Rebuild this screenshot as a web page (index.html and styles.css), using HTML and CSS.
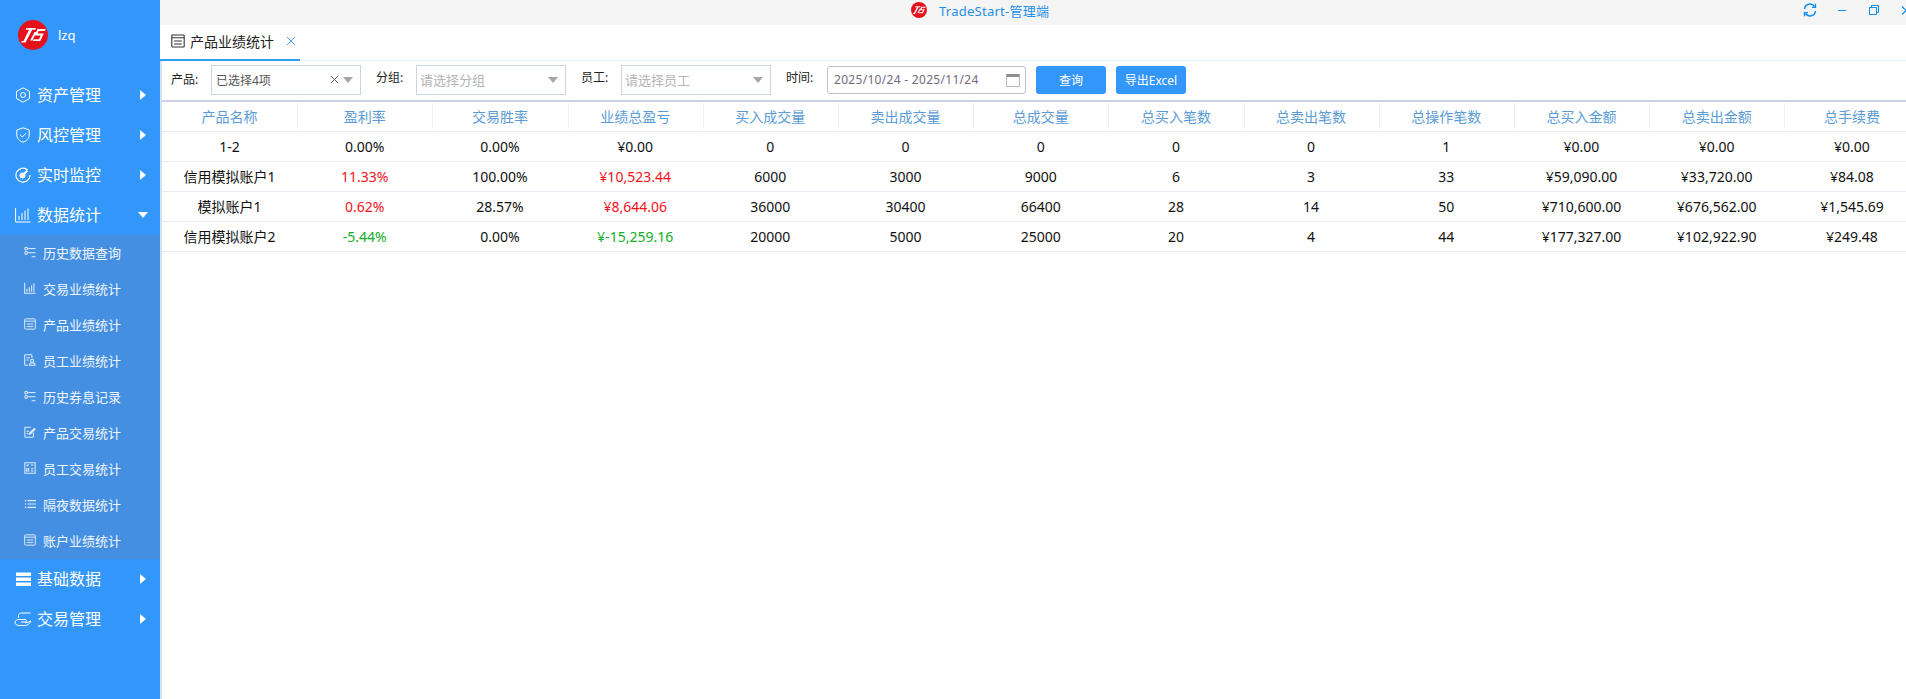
FILE: index.html
```html
<!DOCTYPE html>
<html lang="zh-CN">
<head>
<meta charset="utf-8">
<title>TradeStart-管理端</title>
<link rel="stylesheet" href="styles.css">
</head>
<body>
<svg class="defs" width="0" height="0" aria-hidden="true">
  <symbol id="logo" viewBox="0 0 30 30">
    <circle cx="15" cy="15" r="15" fill="#e5121d"/>
    <path d="M8.500 8h9.500l-.8 1.800h-3L7.500 22.500H3l.8-1.500h1.700l5.600-11.200H7.600z" fill="#fff"/>
    <path d="M12.200 20.500l4.300-8.500h2.100l-4.300 8.500z" fill="#fff"/>
    <path d="M19.500 9h8.300l-1 1.900h-6l-1.300 2.600h6.300l-3.500 7.600h-7.500l.9-1.800h5.300l1.700-3.900h-6.200z" fill="#fff"/>
  </symbol>
  <symbol id="doc" viewBox="0 0 14 14">
    <path d="M1.500 1h11a.7.7 0 0 1 .7.7v10.600a.7.7 0 0 1-.7.7h-11a.7.7 0 0 1-.7-.7V1.700a.7.7 0 0 1 .7-.7zM.8 3.700h12.400M3.200 7h7.600M3.200 10h7.600" fill="none" stroke="currentColor" stroke-width="1.100"/>
  </symbol>
  <symbol id="sliders" viewBox="0 0 14 14">
    <circle cx="2.500" cy="3" r="1.600" fill="none" stroke="currentColor" stroke-width="1.200"/><path d="M5 3h8.500" stroke="currentColor" stroke-width="1.200"/>
    <circle cx="2.500" cy="8" r="1.600" fill="none" stroke="currentColor" stroke-width="1.200"/><path d="M5 8h8.500M9 12.500h4.500" stroke="currentColor" stroke-width="1.200"/>
  </symbol>
  <symbol id="bars" viewBox="0 0 14 14">
    <path d="M.8 1v12.200h12.800M3.500 8v3.500M6.200 6v5.500M8.900 4v7.500M11.600 1.500v10" fill="none" stroke="currentColor" stroke-width="1.200"/>
  </symbol>
  <symbol id="person-doc" viewBox="0 0 14 14">
    <path d="M5 13H1.500a.7.700 0 0 1-.7-.7V1.700a.7.700 0 0 1 .7-.7h7a.7.700 0 0 1 .7.7v3M3 4.500h4M3 7h2.500" fill="none" stroke="currentColor" stroke-width="1.200"/>
    <circle cx="9.500" cy="8" r="1.800" fill="none" stroke="currentColor" stroke-width="1.200"/><path d="M6.500 13c0-2 1.300-2.800 3-2.800s3.500.8 3.500 2.800z" fill="none" stroke="currentColor" stroke-width="1.200"/>
  </symbol>
  <symbol id="edit" viewBox="0 0 14 14">
    <path d="M11 7.500v4.800a.7.700 0 0 1-.7.7H1.700a.7.700 0 0 1-.7-.7V2.200a.7.700 0 0 1 .7-.7H8M3 6h3M3 9h2.500" fill="none" stroke="currentColor" stroke-width="1.200"/>
    <path d="M5.500 10.500l.5-2.500L12 2l1.800 1.800-6 6z" fill="currentColor"/>
  </symbol>
  <symbol id="calc" viewBox="0 0 14 14">
    <path d="M1 1h12v12H1zM3 3.500l1 1 1.500-2M8 3.500h3M3 8h2.500v2.500H3zM8 8h3M8 10.500h3" fill="none" stroke="currentColor" stroke-width="1.200"/>
  </symbol>
  <symbol id="list" viewBox="0 0 14 14">
    <path d="M4 3h10M4 7h10M4 11h10" stroke="currentColor" stroke-width="1.400"/>
    <path d="M1 3h1.500M1 7h1.500M1 11h1.500" stroke="currentColor" stroke-width="1.400"/>
  </symbol>
  <symbol id="arrow-right" viewBox="0 0 6 10"><path d="M0 0l6 5-6 5z" fill="currentColor"/></symbol>
  <symbol id="arrow-down" viewBox="0 0 10 6"><path d="M0 0h10L5 6z" fill="currentColor"/></symbol>
</svg>

<div class="app">
  <aside class="sidebar">
    <div class="profile">
      <svg class="profile-logo"><use href="#logo"/></svg>
      <span class="profile-name">lzq</span>
    </div>
    <nav class="menu">
      <a class="menu-item">
        <svg class="menu-icon" viewBox="0 0 16 16" fill="none" stroke="currentColor"><path d="M8 .8l6.500 3.600v7.200L8 15.200l-6.500-3.600V4.400z"/><circle cx="8" cy="8" r="2.500"/></svg>
        <span class="menu-label">资产管理</span>
        <svg class="caret-right"><use href="#arrow-right"/></svg>
      </a>
      <a class="menu-item">
        <svg class="menu-icon" viewBox="0 0 16 16" fill="none" stroke="currentColor"><path d="M8 .8l6.200 2.200v5c0 3.500-2.700 6-6.200 7.200C4.500 14 1.800 11.500 1.800 8V3z"/><path d="M5 7.800l2.300 2.200 3.800-3.800"/></svg>
        <span class="menu-label">风控管理</span>
        <svg class="caret-right"><use href="#arrow-right"/></svg>
      </a>
      <a class="menu-item">
        <svg class="menu-icon" viewBox="0 0 16 16" fill="none" stroke="currentColor"><path d="M12.500 2.800A7 7 0 1 0 15 8" stroke-width="1.200"/><circle cx="7.500" cy="8.500" r="2.600" fill="currentColor"/><path d="M8 8l4.500-4.500" stroke-width="2"/></svg>
        <span class="menu-label">实时监控</span>
        <svg class="caret-right"><use href="#arrow-right"/></svg>
      </a>
      <a class="menu-item">
        <svg class="menu-icon" viewBox="0 0 16 16" fill="none" stroke="currentColor"><path d="M.6 1v14h15M4 9v4M7 6v7M10 3.500V13M13 1.500V13"/></svg>
        <span class="menu-label">数据统计</span>
        <svg class="caret-down"><use href="#arrow-down"/></svg>
      </a>
      <div class="submenu">
        <a class="sub-item"><svg class="sub-icon"><use href="#sliders"/></svg><span>历史数据查询</span></a>
        <a class="sub-item"><svg class="sub-icon"><use href="#bars"/></svg><span>交易业绩统计</span></a>
        <a class="sub-item"><svg class="sub-icon"><use href="#doc"/></svg><span>产品业绩统计</span></a>
        <a class="sub-item"><svg class="sub-icon"><use href="#person-doc"/></svg><span>员工业绩统计</span></a>
        <a class="sub-item"><svg class="sub-icon"><use href="#sliders"/></svg><span>历史券息记录</span></a>
        <a class="sub-item"><svg class="sub-icon"><use href="#edit"/></svg><span>产品交易统计</span></a>
        <a class="sub-item"><svg class="sub-icon"><use href="#calc"/></svg><span>员工交易统计</span></a>
        <a class="sub-item"><svg class="sub-icon"><use href="#list"/></svg><span>隔夜数据统计</span></a>
        <a class="sub-item"><svg class="sub-icon"><use href="#doc"/></svg><span>账户业绩统计</span></a>
      </div>
      <a class="menu-item">
        <svg class="menu-icon" viewBox="0 0 16 16" fill="currentColor"><path d="M1 1.500h15v3.500H1zM1 6.500h15V10H1zM1 11.500h15V15H1z"/></svg>
        <span class="menu-label">基础数据</span>
        <svg class="caret-right"><use href="#arrow-right"/></svg>
      </a>
      <a class="menu-item">
        <svg class="menu-icon wide" viewBox="0 0 18 16" fill="none" stroke="currentColor"><path d="M4.500 7V4.500C4.500 3 6 2 7.500 2h9M4 8.500h7c2 0 2 2.500 0 2.500H7"/><path d="M1 11c1-2 2-2.500 3-2.500M1 11c0 2 1.500 3.500 4 3.500h6c2.500 0 5-2 6-4.500-2 1-4 1.500-6 2"/></svg>
        <span class="menu-label">交易管理</span>
        <svg class="caret-right"><use href="#arrow-right"/></svg>
      </a>
    </nav>
  </aside>

  <main class="main">
    <header class="titlebar">
      <svg class="title-logo"><use href="#logo"/></svg>
      <span class="title-text">TradeStart-管理端</span>
      <div class="window-controls">
        <svg class="win-btn" viewBox="0 0 14 14" fill="none" stroke="currentColor" stroke-width="1.500"><path d="M1.500 6A5.500 5.500 0 0 1 11.500 3.500M12.500 8A5.500 5.500 0 0 1 2.500 10.500"/><path d="M12.500 .8v3.500H9M1.500 13.200V9.700H5" stroke-width="1.300"/></svg>
        <svg class="win-btn" viewBox="0 0 14 14" stroke="currentColor"><path d="M3 7.500h8"/></svg>
        <svg class="win-btn" viewBox="0 0 14 14" fill="none" stroke="currentColor"><path d="M2.500 4.500h7v7h-7zM4.500 4.500v-2h7v7h-2"/></svg>
        <svg class="win-btn" viewBox="0 0 14 14" fill="none" stroke="currentColor" stroke-width="1.200"><path d="M3 3.500l8 8M11 3.500l-8 8"/></svg>
      </div>
    </header>

    <div class="tabs">
      <div class="tab">
        <svg class="tab-icon"><use href="#doc"/></svg>
        <span>产品业绩统计</span>
        <svg class="tab-close" viewBox="0 0 10 10" stroke="currentColor"><path d="M1 1l8 8M9 1l-8 8"/></svg>
      </div>
    </div>

    <div class="content">
      <form class="toolbar">
        <label class="field-label">产品:</label>
        <div class="select">
          <span class="select-value">已选择4项</span>
          <svg class="select-clear" viewBox="0 0 10 10" stroke="currentColor"><path d="M1 1l8 8M9 1l-8 8"/></svg>
          <svg class="select-arrow"><use href="#arrow-down"/></svg>
        </div>
        <label class="field-label raised">分组:</label>
        <div class="select">
          <span class="select-placeholder">请选择分组</span>
          <svg class="select-arrow"><use href="#arrow-down"/></svg>
        </div>
        <label class="field-label raised">员工:</label>
        <div class="select">
          <span class="select-placeholder">请选择员工</span>
          <svg class="select-arrow"><use href="#arrow-down"/></svg>
        </div>
        <label class="field-label raised">时间:</label>
        <div class="date-range">
          <span>2025/10/24 - 2025/11/24</span>
          <svg class="calendar" viewBox="0 0 14 14"><path d="M.5 1.500h13v12H.5z" fill="#fff" stroke="#b9b9b9"/><path d="M.5 1h13v3H.5z" fill="#8d8d8d"/></svg>
        </div>
        <button type="button" class="btn btn-query">查询</button>
        <button type="button" class="btn btn-export">导出Excel</button>
      </form>

      <div class="table-wrap">
        <table class="grid">
          <thead>
            <tr>
              <th>产品名称</th><th>盈利率</th><th>交易胜率</th><th>业绩总盈亏</th><th>买入成交量</th><th>卖出成交量</th><th>总成交量</th><th>总买入笔数</th><th>总卖出笔数</th><th>总操作笔数</th><th>总买入金额</th><th>总卖出金额</th><th>总手续费</th>
            </tr>
          </thead>
          <tbody>
            <tr><td>1-2</td><td>0.00%</td><td>0.00%</td><td>¥0.00</td><td>0</td><td>0</td><td>0</td><td>0</td><td>0</td><td>1</td><td>¥0.00</td><td>¥0.00</td><td>¥0.00</td></tr>
            <tr><td>信用模拟账户1</td><td class="up">11.33%</td><td>100.00%</td><td class="up">¥10,523.44</td><td>6000</td><td>3000</td><td>9000</td><td>6</td><td>3</td><td>33</td><td>¥59,090.00</td><td>¥33,720.00</td><td>¥84.08</td></tr>
            <tr><td>模拟账户1</td><td class="up">0.62%</td><td>28.57%</td><td class="up">¥8,644.06</td><td>36000</td><td>30400</td><td>66400</td><td>28</td><td>14</td><td>50</td><td>¥710,600.00</td><td>¥676,562.00</td><td>¥1,545.69</td></tr>
            <tr><td>信用模拟账户2</td><td class="down">-5.44%</td><td>0.00%</td><td class="down">¥-15,259.16</td><td>20000</td><td>5000</td><td>25000</td><td>20</td><td>4</td><td>44</td><td>¥177,327.00</td><td>¥102,922.90</td><td>¥249.48</td></tr>
          </tbody>
        </table>
      </div>
    </div>
  </main>
</div>
</body>
</html>
```
FILE: styles.css
```css
* { box-sizing: border-box; }
html, body { height: 100%; }
body {
  margin: 0;
  overflow: hidden;
  background: #fff;
  color: #111;
  font-family: "Noto Sans", "Noto Sans CJK SC", sans-serif;
  font-size: 14px;
}
.defs { position: absolute; }
.app { display: flex; height: 100%; }

/* sidebar */
.sidebar {
  flex: 0 0 160px;
  background: #3396fb;
  color: #fff;
}
.profile {
  display: flex;
  align-items: center;
  height: 75px;
  padding: 0 0 5px 18px;
}
.profile-logo { width: 30px; height: 30px; }
.profile-name { margin-left: 10px; font-size: 13px; line-height: 1; }
.menu-item {
  display: flex;
  align-items: center;
  height: 40px;
  padding-left: 15px;
  font-size: 16px;
}
.menu-icon { width: 16px; height: 16px; flex: none; }
.menu-icon.wide { width: 18px; margin-left: -1px; margin-right: -1px; }
.menu-label { margin-left: 6px; width: 94px; line-height: 1; }
.caret-right { width: 6px; height: 10px; margin-left: 9px; }
.caret-down { width: 10px; height: 6px; margin-left: 7px; }
.submenu { background: #448fe1; }
.sub-item {
  display: flex;
  align-items: center;
  height: 36px;
  padding: 0 0 2px 24px;
  font-size: 13px;
  color: #f2f7fd;
}
.sub-icon { width: 12px; height: 12px; margin-right: 7px; flex: none; color: #e0edfb; }

/* main */
.main {
  flex: 1;
  min-width: 0;
  display: flex;
  flex-direction: column;
  overflow: hidden;
}
.titlebar {
  display: flex;
  align-items: center;
  height: 25px;
  padding: 0 0 5px 751px;
  background: #f5f5f5;
  flex: none;
}
.title-logo { width: 16px; height: 16px; }
.title-text { margin-left: 12px; color: #1d8fe9; font-size: 13px; letter-spacing: .25px; }
.window-controls {
  display: flex;
  margin-left: auto;
  margin-right: -7px;
  gap: 18px;
  color: #0b8df2;
}
.win-btn { width: 14px; height: 14px; }

.tabs {
  height: 36px;
  flex: none;
  border-bottom: 1px solid #e3f0fb;
}
.tab {
  display: flex;
  align-items: center;
  width: 140px;
  height: 36px;
  padding: 0 0 3px 11px;
  border-bottom: 2px solid #2d9cf3;
  color: #222;
}
.tab-icon { width: 14px; height: 14px; margin-right: 5px; color: #333; }
.tab-close { width: 10px; height: 10px; margin-left: 12px; color: #4ea6f0; }

.content {
  flex: 1;
  min-height: 0;
  border-left: 2px solid #d6e2f2;
}

/* toolbar */
.toolbar {
  display: flex;
  align-items: center;
  height: 41px;
  padding-left: 9px;
  font-size: 12px;
  border-bottom: 2px solid #cdd2e0;
  padding-bottom: 2px;
}
.field-label { width: 40px; color: #222; line-height: 1; margin-top: 1px; }
.field-label.raised { margin-top: -3px; }
.select {
  display: flex;
  align-items: center;
  width: 150px;
  height: 30px;
  margin-right: 15px;
  padding: 0 7px 0 4px;
  border: 1px solid #ccd5e2;
  background: #fff;
}
.select-value { color: #555; flex: 1; }
.select-placeholder { color: #b5b5b5; flex: 1; font-size: 13px; margin-left: -1px; }
.select-clear { width: 9px; height: 9px; color: #555; margin-right: 4px; }
.select-arrow { width: 10px; height: 6px; color: #a5a5a5; }
.date-range {
  display: flex;
  align-items: center;
  justify-content: space-between;
  width: 199px;
  height: 28px;
  margin-left: 1px;
  padding: 0 5px 0 6px;
  border: 1px solid #c2c2c8;
  border-radius: 3px;
  color: #746a80;
  font-size: 12px;
  letter-spacing: .3px;
}
.calendar { width: 14px; height: 14px; }
.btn {
  height: 28px;
  border: 0;
  border-radius: 3px;
  background: #3396fb;
  color: #fff;
  font: inherit;
  font-size: 12px;
  padding: 0;
}
.btn-query { width: 70px; margin-left: 10px; }
.btn-export { width: 70px; margin-left: 10px; }

/* table */
.table-wrap { overflow: hidden; }
.grid {
  width: 1757.6px;
  table-layout: fixed;
  border-collapse: separate;
  border-spacing: 0;
}
.grid th, .grid td {
  padding: 0;
  height: 30px;
  text-align: center;
  font-weight: 400;
  line-height: 29px;
  border-bottom: 1px solid #e9ecf2;
  white-space: nowrap;
}
.grid th {
  color: #5a9bd6;
  position: relative;
}
.grid th + th::before {
  content: "";
  position: absolute;
  left: 0;
  top: 1px;
  bottom: 2px;
  width: 1px;
  background: #eef1f5;
}
.grid td { color: #111; }
.grid td.up { color: #f5101c; }
.grid td.down { color: #12ad2b; }
```
